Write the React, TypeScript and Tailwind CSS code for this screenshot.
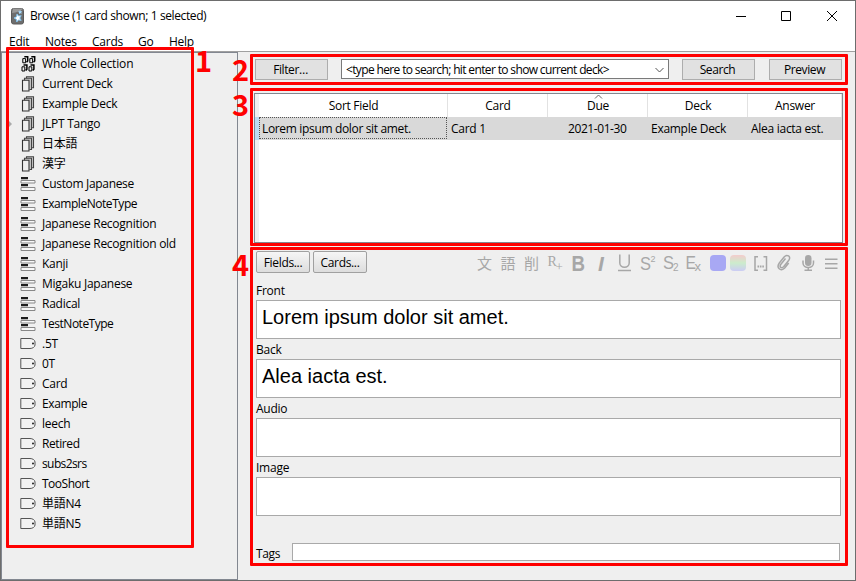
import React from "react";

type Kind = "all" | "deck" | "note" | "tag";

const items: { kind: Kind; label: string; track?: string; arrow?: boolean }[] = [
  { kind: "all", label: "Whole Collection", track: "tracking-[-0.15px]" },
  { kind: "deck", label: "Current Deck" },
  { kind: "deck", label: "Example Deck" },
  { kind: "deck", label: "JLPT Tango", arrow: true },
  { kind: "deck", label: "日本語" },
  { kind: "deck", label: "漢字" },
  { kind: "note", label: "Custom Japanese", track: "tracking-[-0.33px]" },
  { kind: "note", label: "ExampleNoteType", track: "tracking-[-0.45px]" },
  { kind: "note", label: "Japanese Recognition" },
  { kind: "note", label: "Japanese Recognition old" },
  { kind: "note", label: "Kanji" },
  { kind: "note", label: "Migaku Japanese" },
  { kind: "note", label: "Radical" },
  { kind: "note", label: "TestNoteType", track: "tracking-[-0.5px]" },
  { kind: "tag", label: ".5T" },
  { kind: "tag", label: "0T" },
  { kind: "tag", label: "Card" },
  { kind: "tag", label: "Example", track: "tracking-[-0.4px]" },
  { kind: "tag", label: "leech" },
  { kind: "tag", label: "Retired", track: "tracking-[-0.4px]" },
  { kind: "tag", label: "subs2srs", track: "tracking-[-0.6px]" },
  { kind: "tag", label: "TooShort", track: "tracking-[-0.5px]" },
  { kind: "tag", label: "単語N4" },
  { kind: "tag", label: "単語N5" },
];

function MiniDeck({ x, y }: { x: number; y: number }) {
  return (
    <g transform={`translate(${x} ${y})`}>
      <path d="M2.300 .5h3.400v4.200l-1.200 1.200" stroke="#000" strokeWidth="1.500" />
      <path d="M.8 2.300h2.800v4.200H.8z" fill="#eee" stroke="#000" />
    </g>
  );
}

function SideIcon({ kind }: { kind: Kind }) {
  return (
    <svg width="16" height="16" viewBox="0 0 16 16" fill="none" className="shrink-0">
      {kind === "all" && (
        <>
          <MiniDeck x={2} y={0.3} />
          <MiniDeck x={9} y={0.3} />
          <MiniDeck x={1.2} y={8.5} />
          <MiniDeck x={8.2} y={8.5} />
        </>
      )}
      {kind === "deck" && (
        <>
          <path d="M6.500 3V.7h7v11h-2" fill="#ccc" stroke="#444" strokeWidth="1.100" />
          <path d="M4.500 4.500V2.300h7v11.200h-2" fill="#ccc" stroke="#444" strokeWidth="1.100" />
          <path d="M2.500 4.300h6.500v10.700h-6.500z" fill="#efefef" stroke="#333" strokeWidth="1.100" />
        </>
      )}
      {kind === "note" && (
        <>
          <path d="M1 4.500h14v2.500H1zM1 11.500h14v3H1z" fill="#f8f8f8" stroke="#888" />
          <path d="M1 1h7v2.200H1zM1 8h7v2.200H1z" fill="#1c1c1c" />
        </>
      )}
      {kind === "tag" && (
        <>
          <path d="M.8 2.500h9.200c2.500 0 5 1.500 5 3.500v3c0 2-2.500 3.500-5 3.500H.8z" fill="#f3f3f3" stroke="#555" />
          <circle cx="13" cy="7.500" r="1" fill="#222" />
        </>
      )}
    </svg>
  );
}

function AppIcon() {
  return (
    <svg width="14" height="17" viewBox="0 0 14 17">
      <rect x=".5" y=".5" width="12" height="15.500" rx="2" fill="#6e6e6e" stroke="#5b5b5b" />
      <path d="M1 5Q8 4 12 1v-.5H2z" fill="#999" />
      <path d="M6 6l1.500 2 2.700-.3L8.800 10l1.400 2.400-2.700-.5L5.700 14l-.3-2.700L3 10l2.500-1.200z" fill="#fff" stroke="#7fc4f2" strokeWidth=".9" />
      <path d="M9 2l.8 1.200 1.400.1-.9 1.100.3 1.400-1.400-.5-1.200.7v-1.400L7 3.600l1.400-.4z" fill="#a9dcff" />
    </svg>
  );
}

function PushButton({ children }: { children: React.ReactNode }) {
  return (
    <div className="flex h-[21px] w-[73px] shrink-0 items-center justify-center border border-[#adadad] bg-[#e1e1e1] pt-px pr-[2px] tracking-[-0.4px]">
      {children}
    </div>
  );
}

function EditorButton({ children }: { children: React.ReactNode }) {
  return (
    <div className="flex h-[22px] w-[54px] items-center justify-center rounded-[2px] border border-[#a0a0a0] bg-linear-to-b from-[#f6f6f6] to-[#dddddd] pt-[2px] tracking-[-0.33px]">
      {children}
    </div>
  );
}

function Field({ name, value }: { name: string; value?: string }) {
  return (
    <div className="flex h-[59px] flex-col">
      <div className="flex h-5 items-center pt-[2px] tracking-[-0.25px]">{name}</div>
      <div className="flex h-[39px] items-center border border-[#a9a9a9] bg-white px-[5px] pb-[5px] font-['Liberation_Sans',sans-serif] text-[20px]">
        {value}
      </div>
    </div>
  );
}

function Toolbar() {
  return (
    <svg width="364" height="22" viewBox="477 251 364 22" fill="none" stroke="#a7a7a7" strokeWidth="1.500">
      <g fill="#a7a7a7" stroke="none">
        <g className="font-['Liberation_Serif','Noto_Sans_CJK_JP',serif]">
          <text x="477" y="268.500" fontSize="15">文</text>
          <text x="500.500" y="268.500" fontSize="15">語</text>
          <text x="524" y="268.500" fontSize="15">削</text>
          <text x="547.500" y="266" fontSize="14">R</text>
          <text x="555.500" y="271" fontSize="13">+</text>
        </g>
        <g className="font-['Liberation_Sans',sans-serif]">
          <text x="571.500" y="270.500" fontSize="21.500" fontWeight="700" textLength="13.500" lengthAdjust="spacingAndGlyphs">B</text>
          <text x="598" y="270.500" fontSize="21" fontWeight="700" fontStyle="italic">I</text>
          <text x="640" y="270" fontSize="19" textLength="11" lengthAdjust="spacingAndGlyphs">S</text>
          <text x="650.500" y="261.500" fontSize="9">2</text>
          <text x="663" y="269" fontSize="19" textLength="11" lengthAdjust="spacingAndGlyphs">S</text>
          <text x="673" y="271" fontSize="10">2</text>
          <text x="685.500" y="268.500" fontSize="19" textLength="10.500" lengthAdjust="spacingAndGlyphs">E</text>
          <text x="694.500" y="271" fontSize="13">x</text>
        </g>
      </g>
      <path d="M619.800 254.500v8.500c0 5.500 9.400 5.500 9.400 0V254.500M618 270.500h13" />
      <rect x="710" y="255" width="16" height="16" rx="4" fill="#a8a8f4" stroke="none" />
      <defs>
        <linearGradient id="swatch" x1="0" y1="0" x2="0" y2="1">
          <stop offset="0" stopColor="#f3cccc" />
          <stop offset=".5" stopColor="#cceccc" />
          <stop offset="1" stopColor="#ccccf4" />
        </linearGradient>
      </defs>
      <rect x="730" y="255" width="16" height="16" rx="4" fill="url(#swatch)" stroke="none" />
      <path d="M758 256.700h-3v13.600h3M763.500 256.700h3v13.600h-3" />
      <path d="M757.500 266.500h6.500" strokeWidth="1.800" strokeDasharray="1.600 .8" />
      <path d="M785.500 258.500l-4.800 6c-1.700 2.700 1 4.200 2.900 2.300l5.200-6.500c2.700-4-1.800-6.500-4.700-3.300l-4.800 6c-3.300 4.500 1.300 9.300 5.400 5l4-5" />
      <rect x="805" y="255" width="6.500" height="11" rx="3.250" fill="#a7a7a7" stroke="none" />
      <path d="M803 260.500v2.500c0 6 10.500 6 10.500 0v-2.500M808.250 267.500v3M804.500 270.300h7.500" />
      <path d="M825 259.200h12.500M825 263.700h12.500M825 268.200h12.500" strokeWidth="1.600" />
    </svg>
  );
}

function HeaderCell({ label, className, sorted }: { label: string; className: string; sorted?: boolean }) {
  return (
    <div className={`relative flex h-[23px] items-center justify-center border-r border-[#e2e2e2] pt-px pl-px ${className}`}>
      {sorted && (
        <svg className="absolute top-0 left-[46px]" width="9" height="5" viewBox="0 0 9 5" fill="none" stroke="#666">
          <path d="M1 4.500l3.500-3.500L8 4.500" />
        </svg>
      )}
      {label}
    </div>
  );
}

export default function App() {
  return (
    <div className="relative flex h-[581px] w-[856px] flex-col overflow-hidden border border-[#6d6d6d] bg-[#efefef] font-['Open_Sans','Noto_Sans_CJK_JP',sans-serif] text-[12px] leading-[20px] whitespace-nowrap text-black">
      <header className="h-[51px] shrink-0 border-b border-[#a0a0a0] bg-white">
        <div className="flex h-[30px] items-center pr-[9px] pl-[10px]">
          <AppIcon />
          <span className="ml-[5px] tracking-[-0.39px]">Browse (1 card shown; 1 selected)</span>
          <svg className="ml-auto" width="110" height="14" viewBox="0 0 110 14" fill="none" stroke="#000">
            <path d="M0 7.500h10M45.500 2.500h9v9h-9zM91 2l10 10M101 2l-10 10" />
          </svg>
        </div>
        <nav className="flex h-5 items-center pt-[2px] pl-2 tracking-[-0.25px]">
          <span className="w-9">Edit</span>
          <span className="w-[47px]">Notes</span>
          <span className="w-[46px]">Cards</span>
          <span className="w-[31px]">Go</span>
          <span>Help</span>
        </nav>
      </header>
      <div className="flex min-h-0 flex-1">
        <aside className="w-[237px] shrink-0 border border-[#828790] pt-px">
          {items.map((item) => (
            <div key={item.label} className="flex h-5 items-center pl-[6px]">
              <span className="w-[12px]">
                {item.arrow && (
                  <svg width="4" height="6" viewBox="0 0 4 6">
                    <path d="M1 0l3 3-3 3z" fill="#aaa" />
                  </svg>
                )}
              </span>
              <SideIcon kind={item.kind} />
              <span className={`ml-[6px] ${item.track ?? "tracking-[-0.26px]"}`}>{item.label}</span>
            </div>
          ))}
        </aside>
        <main className="flex w-[605px] flex-col pt-[7px] pl-4">
          <div className="flex h-[21px] items-start pl-px">
            <PushButton>Filter…</PushButton>
            <div className="ml-[13px] flex h-5 w-[328px] shrink-0 items-center justify-between border border-[#7a7a7a] bg-white pt-px pr-1 pl-1">
              <span className="tracking-[-0.64px]">&lt;type here to search; hit enter to show current deck&gt;</span>
              <svg width="9" height="6" viewBox="0 0 9 6" fill="none" stroke="#555">
                <path d="M.5 1l4 4 4-4" />
              </svg>
            </div>
            <div className="ml-[13px]"><PushButton>Search</PushButton></div>
            <div className="ml-[14px]"><PushButton>Preview</PushButton></div>
          </div>
          <section className="mt-[13px] h-[150px] w-[589px] shrink-0 border border-[#828790] bg-white tracking-[-0.28px]">
            <div className="flex h-full">
              <div className="h-full w-1 bg-[#f0f0f0] pt-[23px]">
                <div className="h-[23px] bg-[#bcdcf4]" />
              </div>
              <div className="flex-1">
                <div className="flex">
                  <HeaderCell label="Sort Field" className="w-[189px]" />
                  <HeaderCell label="Card" className="w-[100px]" />
                  <HeaderCell label="Due" className="w-[100px]" sorted />
                  <HeaderCell label="Deck" className="w-[100px]" />
                  <HeaderCell label="Answer" className="w-[94px]" />
                </div>
                <div className="flex h-[23px] items-center bg-[#d9d9d9]">
                  <div className="flex h-[22px] w-[188px] items-center self-start border border-dotted border-[#555] pt-[2px] pl-[2px] tracking-[-0.34px]">Lorem ipsum dolor sit amet.</div>
                  <div className="w-[101px] pl-1">Card 1</div>
                  <div className="w-[100px] pl-[20px] tracking-[-0.42px]">2021-01-30</div>
                  <div className="w-[100px] pl-[3px]">Example Deck</div>
                  <div className="pl-[3px]">Alea iacta est.</div>
                </div>
              </div>
            </div>
          </section>
          <section className="flex w-[603px] flex-col pt-2 pl-[2px]">
            <div className="flex h-[22px] w-[585px] items-center">
              <EditorButton>Fields...</EditorButton>
              <div className="ml-[3px]"><EditorButton>Cards...</EditorButton></div>
              <div className="ml-auto"><Toolbar /></div>
            </div>
            <div className="mt-[7px] w-[585px]">
              <Field name="Front" value="Lorem ipsum dolor sit amet." />
              <Field name="Back" value="Alea iacta est." />
              <Field name="Audio" />
              <Field name="Image" />
            </div>
            <div className="mt-[27px] flex h-[18px] items-center">
              <span className="w-9 pt-[3px] tracking-[-0.35px]">Tags</span>
              <div className="h-[18px] w-[548px] border border-[#a9a9a9] bg-white" />
            </div>
          </section>
        </main>
      </div>
      <div className="absolute top-[46px] left-[5px] h-[501px] w-[188px] rounded-[1px] border-3 border-[#ff0000]" />
      <div className="absolute top-[53px] left-[249px] h-[31px] w-[598px] rounded-[1px] border-3 border-[#ff0000]" />
      <div className="absolute top-[87px] left-[249px] h-[158px] w-[598px] rounded-[1px] border-3 border-[#ff0000]" />
      <div className="absolute top-[246px] left-[249px] h-[319px] w-[598px] rounded-[1px] border-3 border-[#ff0000]" />
      <div className="font-['Noto_Sans_CJK_JP',sans-serif] text-[29px] leading-[30px] font-bold text-[#ff0000]">
        <span className="absolute top-[43px] left-[194px]">1</span>
        <span className="absolute top-[52px] left-[231px]">2</span>
        <span className="absolute top-[87px] left-[231px]">3</span>
        <span className="absolute top-[247px] left-[231px]">4</span>
      </div>
    </div>
  );
}
